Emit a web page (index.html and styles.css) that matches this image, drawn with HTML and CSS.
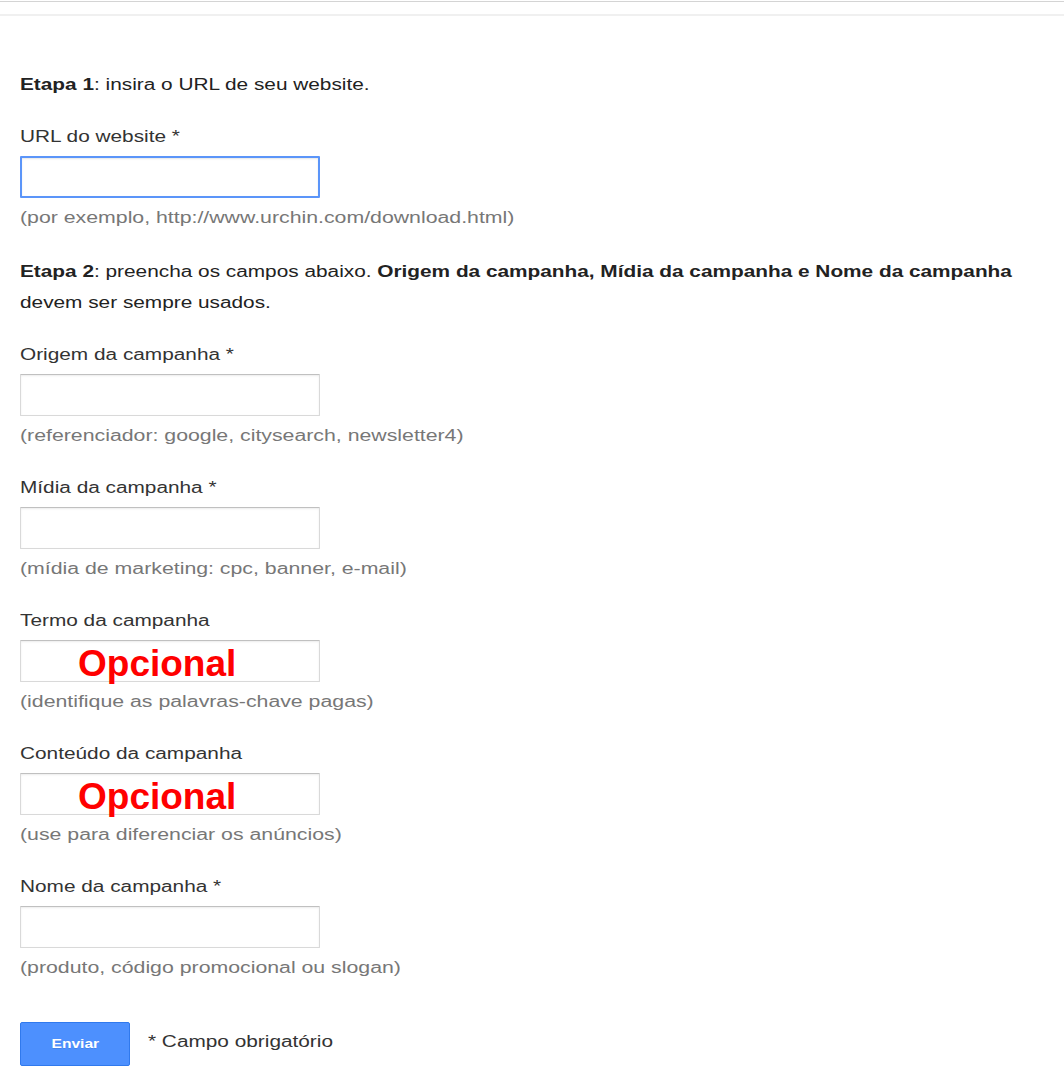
FILE: index.html
```html
<!DOCTYPE html>
<html lang="pt-BR">
<head>
  <meta charset="UTF-8">
  <title>Criador de URL</title>
  <link rel="stylesheet" href="styles.css">
</head>
<body>

<div class="topbar"></div>

<form class="builder" onsubmit="return false">
  <p class="step step-1"><b>Etapa 1</b>: insira o URL de seu website.</p>

  <div class="field field-first">
    <label class="field-label" for="url">URL do website *</label>
    <input id="url" class="field-input is-focused" type="text">
    <div class="field-hint">(por exemplo, http://www.urchin.com/download.html)</div>
  </div>

  <p class="step step-2"><b>Etapa 2</b>: preencha os campos abaixo. <b>Origem da campanha, Mídia da campanha e Nome da campanha</b> devem ser sempre usados.</p>

  <div class="field field-after-step">
    <label class="field-label" for="source">Origem da campanha *</label>
    <input id="source" class="field-input" type="text">
    <div class="field-hint">(referenciador: google, citysearch, newsletter4)</div>
  </div>

  <div class="field">
    <label class="field-label" for="medium">Mídia da campanha *</label>
    <input id="medium" class="field-input" type="text">
    <div class="field-hint">(mídia de marketing: cpc, banner, e-mail)</div>
  </div>

  <div class="field">
    <label class="field-label" for="term">Termo da campanha</label>
    <div class="input-wrap">
      <input id="term" class="field-input" type="text">
      <span class="optional-tag">Opcional</span>
    </div>
    <div class="field-hint">(identifique as palavras-chave pagas)</div>
  </div>

  <div class="field">
    <label class="field-label" for="content">Conteúdo da campanha</label>
    <div class="input-wrap">
      <input id="content" class="field-input" type="text">
      <span class="optional-tag">Opcional</span>
    </div>
    <div class="field-hint">(use para diferenciar os anúncios)</div>
  </div>

  <div class="field">
    <label class="field-label" for="name">Nome da campanha *</label>
    <input id="name" class="field-input" type="text">
    <div class="field-hint">(produto, código promocional ou slogan)</div>
  </div>

  <div class="actions">
    <button class="btn-submit" type="submit"><span>Enviar</span></button>
    <span class="required-note">* Campo obrigatório</span>
  </div>
</form>

</body>
</html>
```

FILE: styles.css
```css
body {
  margin: 0;
  font-family: "Liberation Sans", Arial, sans-serif;
  font-size: 16px;
  color: #222;
  background: #fff;
}

.topbar {
  margin-top: 1px;
  height: 12px;
  border-top: 1px solid #d4d4d4;
  border-bottom: 2px solid #f0f0f0;
}

.builder {
  padding: 0 20px;
}

/* o texto da captura está esticado na horizontal */
.step,
.field-label,
.field-hint,
.required-note {
  transform: scaleX(1.3);
  transform-origin: left center;
}

.step {
  margin: 0;
  width: fit-content;
  line-height: 20px;
  color: #222;
}

.step-1 {
  margin-top: 59px;
}

.step-2 {
  margin-top: 28px;
  line-height: 31px;
  width: 790px;
}

.field {
  margin-top: 32px;
}

.field-after-step {
  margin-top: 27px;
}

.field-label {
  display: block;
  width: fit-content;
  line-height: 20px;
  color: #333;
  margin-bottom: 9px;
}

.field-input {
  display: block;
  box-sizing: border-box;
  width: 300px;
  height: 42px;
  margin: 0;
  padding: 0 8px;
  border: 1px solid #d9d9d9;
  border-top-color: #c0c0c0;
  border-radius: 1px;
  box-shadow: inset 0 1px 2px rgba(0, 0, 0, 0.08);
  background: #fff;
  font-family: inherit;
  font-size: 16px;
  outline: none;
}

.field-input.is-focused {
  border: 2px solid #5b95f9;
  box-shadow: inset 0 1px 2px rgba(0, 0, 0, 0.1);
}

.input-wrap {
  position: relative;
  width: 300px;
}

.optional-tag {
  position: absolute;
  left: 58px;
  top: 5px;
  font-size: 37px;
  line-height: 37px;
  font-weight: bold;
  color: #ff0000;
  pointer-events: none;
}

.field-hint {
  width: fit-content;
  margin-top: 10px;
  line-height: 20px;
  color: #777;
  transform: scaleX(1.33);
}

.actions {
  display: flex;
  align-items: center;
  margin-top: 44px;
  padding-bottom: 20px;
}

.btn-submit {
  width: 110px;
  height: 44px;
  padding: 0;
  border: 1px solid #3079ed;
  border-radius: 2px;
  background: #4d90fe;
  color: #fff;
  font-family: inherit;
  font-size: 12px;
  font-weight: bold;
  cursor: pointer;
}

.btn-submit span {
  display: inline-block;
  transform: scaleX(1.3);
  text-shadow: 0 1px rgba(0, 0, 0, 0.1);
}

.required-note {
  margin-left: 18px;
  margin-top: -4px;
  line-height: 20px;
  color: #333;
}
```
